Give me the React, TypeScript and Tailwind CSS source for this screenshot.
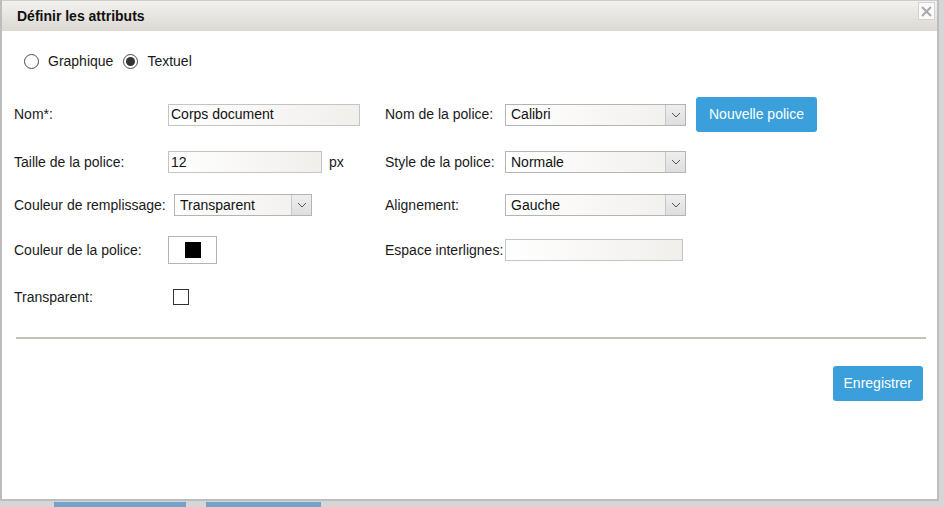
const inputBg = "bg-[linear-gradient(to_right,#ffffff,#f1efec)]";

function Chevron() {
  return (
    <svg width="10" height="6" viewBox="0 0 10 6" fill="none">
      <path d="M1 1 L5 5 L9 1" stroke="#555" strokeWidth="1" />
    </svg>
  );
}

function Select({ value, width }: { value: string; width: string }) {
  return (
    <div className={`${width} h-[22px] flex border border-[#b4b4b4] ${inputBg}`}>
      <div className="flex-1 flex items-center pl-[5px] text-[14px] text-[#111]">{value}</div>
      <div className="w-[20px] flex items-center justify-center border-l border-[#c8c8c8] bg-[linear-gradient(#eeeeee,#dedede)]">
        <Chevron />
      </div>
    </div>
  );
}

function TextInput({ value, width }: { value?: string; width: string }) {
  return (
    <div className={`${width} h-[22px] flex items-center pl-[2px] border border-[#c4c4c4] ${inputBg} text-[14px] text-[#111]`}>
      {value}
    </div>
  );
}

function Radio({ checked }: { checked?: boolean }) {
  return (
    <div className="w-[15px] h-[15px] rounded-full border border-[#4a4a4a] bg-white flex items-center justify-center">
      {checked && <div className="w-[9px] h-[9px] rounded-full bg-[#333]" />}
    </div>
  );
}

export default function App() {
  return (
    <div
      className="w-[944px] h-[507px] bg-[#d6d6d6] overflow-hidden text-[14px] text-[#1a1a1a]"
      style={{ fontFamily: '"Liberation Sans", Arial, sans-serif' }}
    >
      <div className="w-[939px] h-[501px] bg-white border-x-2 border-b-2 border-[#bdbdbd] flex flex-col">
        {/* Title bar */}
        <div className="h-[31px] flex items-center justify-between pl-[15px] pr-[2px] bg-[linear-gradient(#f2f1ee,#dcd9d3)] border-t border-[#cfcdc8]">
          <span className="font-bold text-[14px] text-[#111]">Définir les attributs</span>
          <div className="self-start mt-[1px] w-[17px] h-[18px] border border-[#d2d2d2] bg-[#fafafa] flex items-center justify-center">
            <svg width="11" height="11" viewBox="0 0 11 11">
              <path d="M1 1 L10 10 M10 1 L1 10" stroke="#a8a8a8" strokeWidth="2" />
            </svg>
          </div>
        </div>

        <div className="flex flex-col pl-[12px] pr-[11px]">
          {/* Radios */}
          <div className="mt-[22px] h-[16px] flex items-center pl-[10px]">
            <Radio />
            <span className="ml-[9px]">Graphique</span>
            <div className="ml-[10px]">
              <Radio checked />
            </div>
            <span className="ml-[9px]">Textuel</span>
          </div>

          {/* Row 1 */}
          <div className="mt-[28px] h-[35px] flex items-center">
            <div className="w-[371px] flex items-center">
              <span className="w-[154px]">Nom*:</span>
              <TextInput value="Corps document" width="w-[192px]" />
            </div>
            <span className="w-[120px]">Nom de la police:</span>
            <Select value="Calibri" width="w-[181px]" />
            <button className="ml-[10px] h-[35px] px-[13px] rounded-[3px] bg-[#3a9fdb] text-white text-[14px]">
              Nouvelle police
            </button>
          </div>

          {/* Row 2 */}
          <div className="mt-[19px] h-[22px] flex items-center">
            <div className="w-[371px] flex items-center">
              <span className="w-[154px]">Taille de la police:</span>
              <TextInput value="12" width="w-[154px]" />
              <span className="ml-[7px]">px</span>
            </div>
            <span className="w-[120px]">Style de la police:</span>
            <Select value="Normale" width="w-[181px]" />
          </div>

          {/* Row 3 */}
          <div className="mt-[21px] h-[22px] flex items-center">
            <div className="w-[371px] flex items-center">
              <span className="w-[160px] whitespace-nowrap">Couleur de remplissage:</span>
              <Select value="Transparent" width="w-[138px]" />
            </div>
            <span className="w-[120px]">Alignement:</span>
            <Select value="Gauche" width="w-[181px]" />
          </div>

          {/* Row 4 */}
          <div className="mt-[20px] h-[28px] flex items-center">
            <div className="w-[371px] flex items-center">
              <span className="w-[154px]">Couleur de la police:</span>
              <div className="w-[49px] h-[28px] border border-[#b4b4b4] bg-white flex items-center justify-center">
                <div className="w-[16px] h-[16px] bg-black" />
              </div>
            </div>
            <span className="w-[120px] whitespace-nowrap">Espace interlignes:</span>
            <TextInput width="w-[178px]" />
          </div>

          {/* Row 5 */}
          <div className="mt-[25px] h-[16px] flex items-center">
            <span className="w-[159px]">Transparent:</span>
            <div className="w-[16px] h-[16px] border border-[#333] bg-white" />
          </div>

          {/* Separator */}
          <div className="mt-[32px] ml-[2px] h-[2px] bg-[#c2c0b9]" />

          {/* Footer */}
          <div className="mt-[27px] flex justify-end pr-[3px]">
            <button className="h-[35px] px-[11px] rounded-[3px] bg-[#3a9fdb] text-white text-[14px]">
              Enregistrer
            </button>
          </div>
        </div>
      </div>

      {/* Page behind the dialog */}
      <div className="flex h-[6px] mt-[1px] pl-[54px] gap-[20px]">
        <div className="w-[132px] bg-[#6fa3c8]" />
        <div className="w-[115px] bg-[#6fa3c8]" />
      </div>
    </div>
  );
}
